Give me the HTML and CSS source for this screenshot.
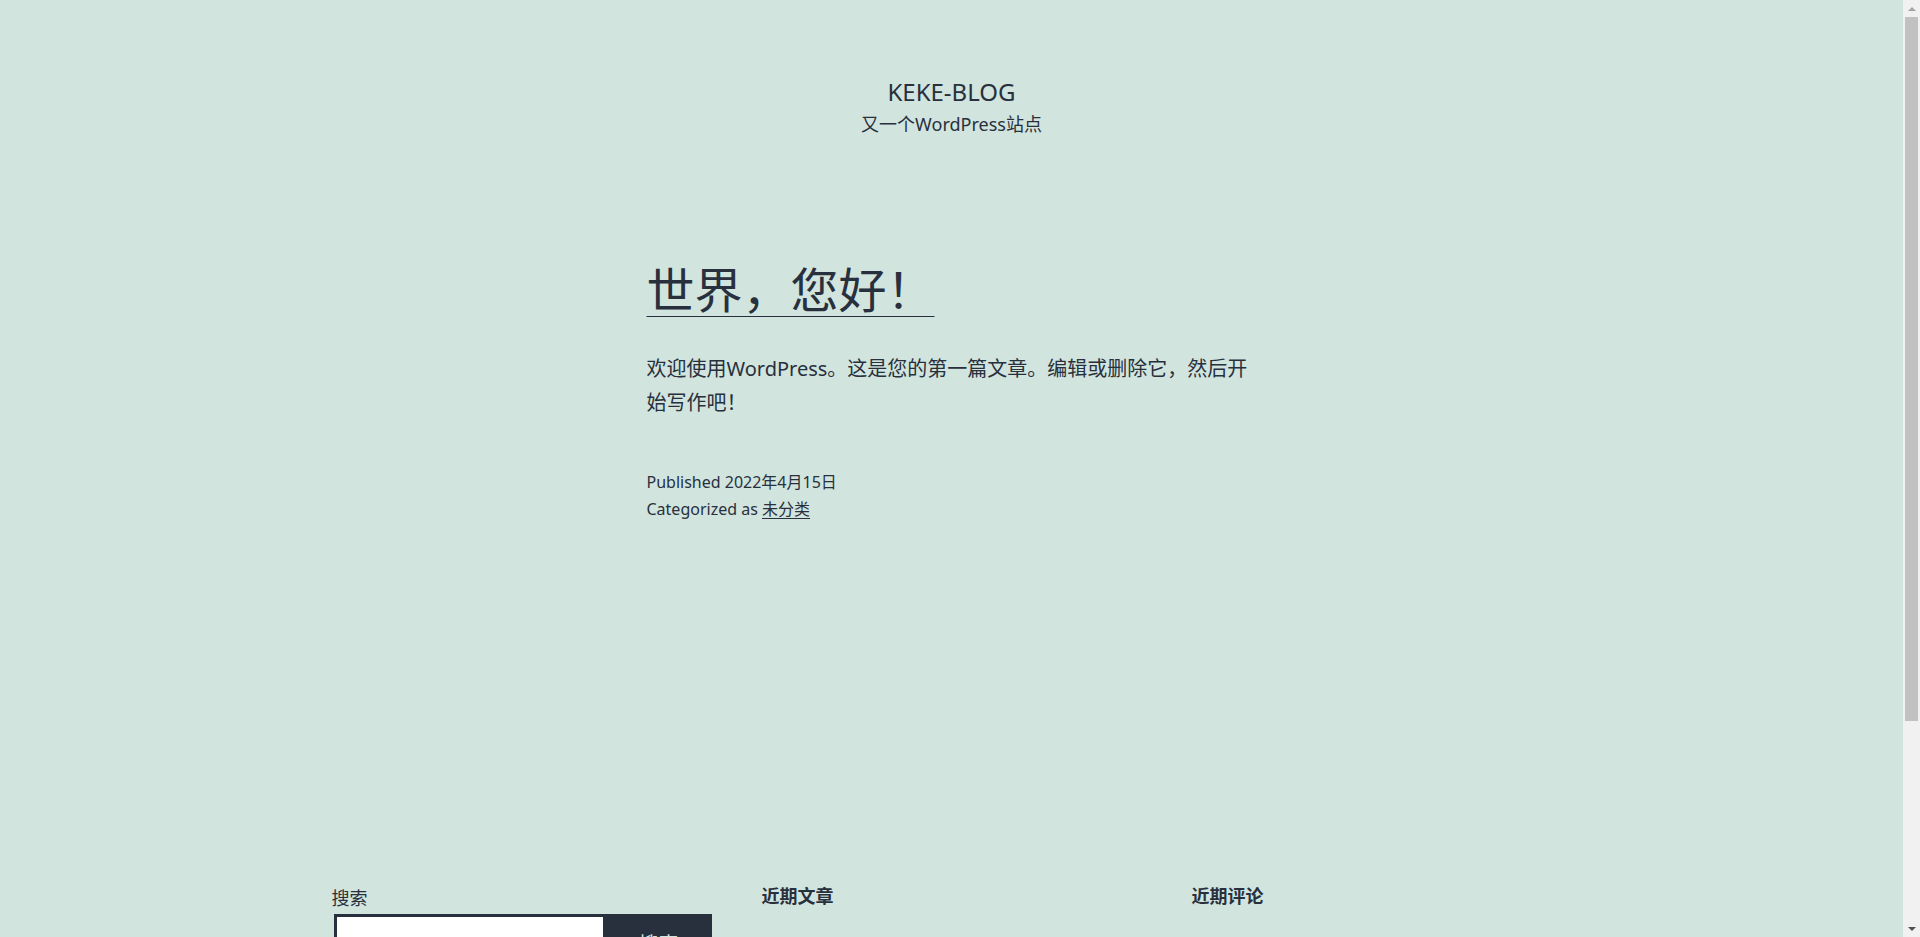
FILE: index.html
```html
<!DOCTYPE html>
<html lang="zh-CN">
<head>
<meta charset="utf-8">
<title>KEKE-BLOG – 又一个WordPress站点</title>
<link rel="stylesheet" href="styles.css">
</head>
<body>
<div class="site">
  <header class="site-header">
    <p class="site-title">KEKE-BLOG</p>
    <p class="site-description">又一个WordPress站点</p>
  </header>

  <main class="site-main">
    <article class="post">
      <h2 class="entry-title"><a href="#">世界，您好！</a></h2>
      <div class="entry-content">
        <p>欢迎使用WordPress。这是您的第一篇文章。编辑或删除它，然后开始写作吧！</p>
      </div>
      <footer class="entry-footer">
        <span class="posted-on">Published 2022年4月15日</span>
        <span class="cat-links">Categorized as <a href="#">未分类</a></span>
      </footer>
    </article>
  </main>

  <aside class="widget-area">
    <section class="widget widget-search">
      <form class="search-form">
        <label class="search-label" for="s">搜索</label>
        <div class="search-row">
          <input class="search-input" id="s" type="search">
          <button class="search-button" type="button">搜索</button>
        </div>
      </form>
    </section>
    <section class="widget">
      <h2 class="widget-title">近期文章</h2>
      <ul class="widget-list">
        <li><a href="#">世界，您好！</a></li>
      </ul>
    </section>
    <section class="widget">
      <h2 class="widget-title">近期评论</h2>
      <ul class="widget-list">
        <li><a href="#">一位WordPress评论者</a> 发表在《<a href="#">世界，您好！</a>》</li>
      </ul>
    </section>
    <section class="widget">
      <h2 class="widget-title">归档</h2>
      <ul class="widget-list">
        <li><a href="#">2022年4月</a></li>
      </ul>
    </section>
    <section class="widget">
      <h2 class="widget-title">分类</h2>
      <ul class="widget-list">
        <li><a href="#">未分类</a></li>
      </ul>
    </section>
  </aside>

  <footer class="site-footer">
    <div class="site-info">
      <span class="footer-name">KEKE-BLOG</span>
      <span class="powered-by">Proudly powered by <a href="#">WordPress</a>.</span>
    </div>
  </footer>
</div>

<div class="scrollbar" aria-hidden="true">
  <div class="sb-arrow sb-up"></div>
  <div class="sb-track"><div class="sb-thumb"></div></div>
  <div class="sb-arrow sb-down"></div>
</div>
</body>
</html>
```

FILE: styles.css
```css
html, body {
  margin: 0;
  padding: 0;
}

body {
  background: #d1e4dd;
  color: #28303d;
  font-family: "Noto Sans", "Noto Sans CJK SC", sans-serif;
  font-size: 20px;
  padding-right: 17px;
}

a {
  color: #28303d;
}

.site {
  display: flex;
  flex-direction: column;
  align-items: center;
}

.site-header {
  padding-top: 76px;
  display: flex;
  flex-direction: column;
  align-items: center;
}

.site-title {
  margin: 0;
  font-size: 24px;
  line-height: 32px;
  text-transform: uppercase;
}

.site-description {
  margin: 0;
  font-size: 18px;
  line-height: 32px;
}

.site-main {
  width: 610px;
  margin-top: 119px;
}

.entry-title {
  margin: 0;
  font-size: 48px;
  font-weight: 400;
  line-height: 62px;
}

.entry-title a {
  text-decoration: underline;
  text-decoration-thickness: 1px;
  text-underline-offset: 8px;
}

.entry-content p {
  margin: 31px 0 0;
  font-size: 20px;
  line-height: 34px;
}

.entry-footer {
  margin-top: 49px;
  display: flex;
  flex-direction: column;
  font-size: 16px;
  line-height: 27px;
}

.entry-footer a {
  text-underline-offset: 3px;
}

.widget-area {
  width: 1240px;
  margin-top: 359px;
  display: grid;
  grid-template-columns: repeat(3, 1fr);
  column-gap: 50px;
  row-gap: 60px;
}

.widget-title {
  margin: 0;
  font-size: 18px;
  font-weight: 700;
  line-height: 28px;
}

.search-form {
  display: flex;
  flex-direction: column;
}

.search-label {
  font-size: 18px;
  line-height: 32px;
}

.search-row {
  display: flex;
  padding-left: 2px;
}

.search-input {
  width: 272px;
  height: 58px;
  box-sizing: border-box;
  border: 3px solid #28303d;
  background: #fff;
  margin: 0;
  font: inherit;
}

.search-button {
  width: 106px;
  height: 58px;
  margin: 0;
  border: 0;
  background: #28303d;
  color: #d1e4dd;
  font-family: inherit;
  font-size: 20px;
}

.widget-list {
  margin: 40px 0 0;
  padding: 0;
  list-style: none;
  font-size: 18px;
  line-height: 30px;
}

.site-footer {
  width: 1240px;
  margin-top: 90px;
  padding: 30px 0 60px;
  border-top: 3px solid #28303d;
}

.site-info {
  display: flex;
  justify-content: space-between;
  font-size: 16px;
}

/* imitation of the browser's vertical scrollbar */
.scrollbar {
  position: fixed;
  top: 0;
  right: 0;
  width: 17px;
  height: 100vh;
  background: #f1f1f1;
  display: flex;
  flex-direction: column;
}

.sb-arrow {
  height: 17px;
  display: flex;
  align-items: center;
  justify-content: center;
}

.sb-up::before {
  content: "";
  border-left: 4px solid transparent;
  border-right: 4px solid transparent;
  border-bottom: 4px solid #a3a3a3;
}

.sb-down::before {
  content: "";
  border-left: 4px solid transparent;
  border-right: 4px solid transparent;
  border-top: 4px solid #505050;
}

.sb-track {
  flex: 1;
  padding: 0 2px;
}

.sb-thumb {
  height: 704px;
  background: #c1c1c1;
}
```
